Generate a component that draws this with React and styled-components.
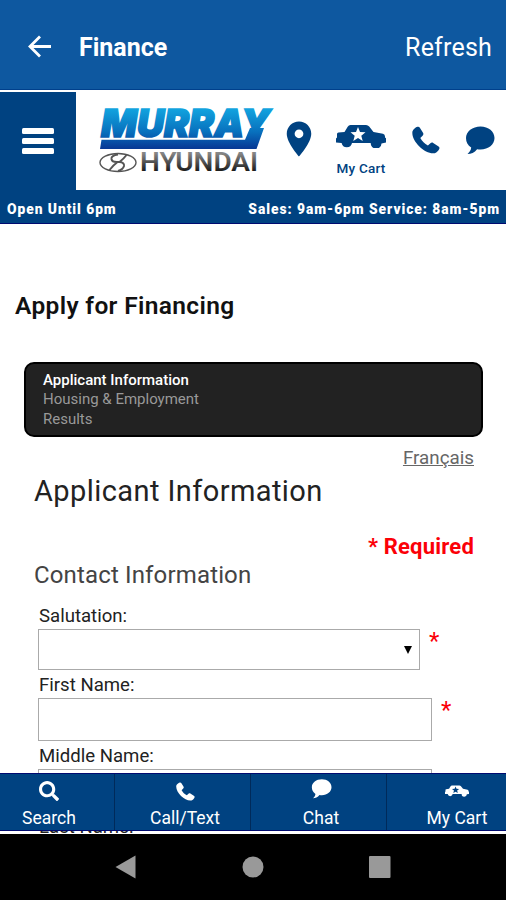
import React from 'react';
import styled, { createGlobalStyle } from 'styled-components';
import { FaSearch } from 'react-icons/fa';
import { MdLocationOn } from 'react-icons/md';

const GlobalStyle = createGlobalStyle`
    * {
        box-sizing: border-box;
    }

    body {
        margin: 0;
        background: #fff;
        font-family: Roboto, "Liberation Sans", sans-serif;
    }
`;

const Screen = styled.div`
    position: relative;
    display: flex;
    flex-direction: column;
    width: 506px;
    height: 900px;
    overflow: hidden;
    background: #fff;
`;

const AppBar = styled.header`
    display: flex;
    align-items: center;
    height: 90px;
    flex: none;
    padding: 4px 14px 0 27px;
    background: #0e58a0;
    border-bottom: 1px solid #00408c;
    color: #fff;
`;

const AppTitle = styled.h1`
    flex: 1;
    margin: 2px 0 0 27px;
    font-size: 25px;
    font-weight: 700;
    line-height: 30px;
`;

const RefreshButton = styled.button`
    margin-top: 2px;
    padding: 0;
    border: none;
    background: none;
    color: #fff;
    font: 400 25px/30px Roboto, sans-serif;
    letter-spacing: 0.2px;
`;

const SiteHeader = styled.div`
    display: flex;
    flex: none;
    height: 98px;
    margin-top: 2px;
    color: #004281;
`;

const MenuButton = styled.button`
    display: flex;
    flex: none;
    flex-direction: column;
    align-items: center;
    justify-content: center;
    gap: 4px;
    width: 76px;
    padding: 0 0 1px;
    border: none;
    background: #004281;
`;

const MenuLine = styled.span`
    width: 32px;
    height: 6px;
    border-radius: 1.5px;
    background: #fff;
`;

const Logo = styled.svg`
    flex: none;
    width: 178px;
    height: 72px;
    margin: 12px 0 0 22px;
    overflow: visible;
`;

const HeaderLinks = styled.nav`
    display: flex;
    flex: 1;
    align-items: flex-start;
    min-width: 0;
    padding-top: 26px;
`;

const HeaderLink = styled.a`
    display: flex;
    flex: none;
    flex-direction: column;
    align-items: center;
    width: ${props => props.$width}px;
    padding-top: ${props => props.$top || 0}px;
    font-size: 13.5px;
    font-weight: 500;
    line-height: 18px;
    letter-spacing: 0.25px;
    white-space: nowrap;

    span {
        margin-top: 11px;
    }
`;

const HoursBar = styled.div`
    display: flex;
    flex: none;
    justify-content: space-between;
    height: 34px;
    padding: 0 6px 0 7px;
    background: #004281;
    border-bottom: 1px solid #000a70;
    color: #fff;
    font-size: 13.8px;
    font-weight: 900;
    line-height: 38px;
    letter-spacing: 0.95px;
`;

const Content = styled.main`
    height: 610px;
    flex: none;
    overflow: hidden;
    color: #222;
`;

const PageTitle = styled.h2`
    margin: 67px 0 0 15px;
    color: #111;
    font-size: 24.5px;
    font-weight: 600;
    line-height: 30px;
    letter-spacing: 0.35px;
`;

const Steps = styled.ol`
    height: 75px;
    margin: 41px 23px 0 24px;
    padding: 7px 17px;
    border: 2px solid #000;
    border-radius: 10px;
    background: #222;
    list-style: none;
`;

const Step = styled.li`
    color: ${props => (props.$active ? '#fff' : '#999')};
    font-size: 15px;
    font-weight: ${props => (props.$active ? 500 : 400)};
    line-height: 19.3px;
`;

const Form = styled.form`
    display: flex;
    flex-direction: column;
    padding: 9px 32px 0 34px;
`;

const LanguageLink = styled.a`
    align-self: flex-end;
    color: #666;
    font-size: 18.8px;
    line-height: 24px;
    text-decoration: underline;
`;

const FormTitle = styled.h3`
    margin: 4px 0 0;
    color: #222;
    font-size: 29px;
    font-weight: 400;
    line-height: 34px;
    letter-spacing: 0.42px;
`;

const RequiredNote = styled.p`
    align-self: flex-end;
    margin: 26px 0 0;
    color: #fb0007;
    font-size: 22px;
    font-weight: 700;
    line-height: 26px;
    letter-spacing: 0.2px;
`;

const SectionTitle = styled.h4`
    margin: 1px 0 16px;
    color: #444;
    font-size: 24px;
    font-weight: 400;
    line-height: 28px;
    letter-spacing: 0.15px;
`;

const Field = styled.div`
    display: flex;
    flex-direction: column;
    height: ${props => props.$height}px;
    padding-left: 4px;
`;

const Label = styled.label`
    padding-left: 1px;
    font-size: 18.6px;
    line-height: 22px;
`;

const FieldRow = styled.div`
    display: flex;
    margin-top: 2px;
`;

const Input = styled.div`
    display: flex;
    align-items: center;
    justify-content: flex-end;
    width: ${props => props.$width}px;
    height: ${props => props.$height}px;
    padding-right: 7px;
    border: 1.5px solid #aaa;
`;

const Asterisk = styled.span`
    margin-left: 9px;
    color: #fb0007;
    font-size: 24px;
    line-height: 25px;
`;

const TabBar = styled.nav`
    position: absolute;
    top: 773px;
    left: 0;
    right: 0;
    display: flex;
    height: 58px;
    overflow: hidden;
    background: #004281;
    border-top: 1px solid #000a70;
    border-bottom: 1px solid #000a70;
`;

const Tab = styled.a`
    display: flex;
    flex: none;
    flex-direction: column;
    align-items: center;
    width: 136px;
    padding: 6px 0 0 5px;
    border-right: 1px solid #002a5a;
    color: #fff;
    font-size: 17.5px;
    line-height: 22px;

    &:first-child {
        margin-left: -21px;
    }
`;

const TabIcon = styled.span`
    display: flex;
    align-items: center;
    height: 22px;
    margin-bottom: 5px;
    padding-bottom: ${props => props.$lift || 0}px;
`;

const SystemBar = styled.div`
    display: flex;
    flex: none;
    align-items: center;
    justify-content: space-between;
    height: 66px;
    padding: 0 115px;
    background: #000;
`;

const BackArrow = () => (
    <svg width="25" height="24" viewBox="0 0 25 24" fill="none" stroke="#fff" strokeWidth="2.8">
        <path d="M24 11.5H3M13 1.5L3 11.5L13 21.5" />
    </svg>
);

const Phone = ({ size }) => (
    <svg width={size} height={size} viewBox="0 0 28 28" fill="currentColor">
        <path d="M.5 5.3C1.3 3.500 3.600 1.200 5.500.8c1.200-.2 1.900.2 2.500 1.200l3 4.800c.7 1.200.5 2-.4 2.900L8.300 12c1.800 3.200 4.300 5.700 7.600 7.500l2.500-2.300c.9-.8 1.800-.9 2.800-.3l5 3.300c1 .7 1.500 1.400 1.200 2.400-.6 2-2.600 4-4.600 4.600C13.500 29-1.400 15 .5 5.300Z" />
    </svg>
);

const Bubble = ({ width, height }) => (
    <svg width={width} height={height} viewBox="0 0 30 29" fill="currentColor">
        <path d="M15.500.5C23.500.5 29.500 5.600 29.500 12S23.500 23.500 15.500 23.500c-1.200 0-2.300-.1-3.400-.3C9.500 26.500 6 28 2.500 28c2-1.700 3.500-3.700 3.700-6.400C2.800 19.400 1 16 1 12 1 5.600 7.500.5 15.500.5Z" />
    </svg>
);

const Car = ({ width, height, star }) => (
    <svg width={width} height={height} viewBox="0 0 50 23" fill="currentColor">
        <path d="M14.500 0H30q2 0 3.200 1.500L37.500 7l9.500 1.700q2 .5 2 2.800v1l1 .7v4.300l-4.500 1A5.300 5.300 0 0 1 34.700 18H16A5.300 5.300 0 0 1 5.600 18L0 17.500V13.500l1-1V9q0-1.300 1.500-1.400L8.500 7l3.200-5.200Q12.700 0 14.500 0Z" />
        <path
            d="M22 2l2 5 5.500.3-4.200 3.400 1.400 5.200L22 13l-4.700 2.900 1.400-5.200-4.200-3.400L20 7Z"
            fill={star}
        />
    </svg>
);

const MurrayLogo = () => (
    <Logo viewBox="0 0 178 72">
        <defs>
            <linearGradient id="blue" x1="0" y1="4" x2="0" y2="44" gradientUnits="userSpaceOnUse">
                <stop offset="0" stopColor="#12a5e0" />
                <stop offset="0.6" stopColor="#0870bd" />
                <stop offset="1" stopColor="#073a96" />
            </linearGradient>
            <linearGradient id="steel" x1="0" y1="49" x2="0" y2="68" gradientUnits="userSpaceOnUse">
                <stop offset="0" stopColor="#888" />
                <stop offset="1" stopColor="#161616" />
            </linearGradient>
        </defs>
        <g fill="url(#blue)">
            <text
                x="3"
                y="33"
                textLength="169"
                lengthAdjust="spacingAndGlyphs"
                fontFamily="Inter, sans-serif"
                fontSize="38.5"
                fontWeight="900"
                fontStyle="italic"
                stroke="url(#blue)"
                strokeWidth="1.6"
            >
                MURRAY
            </text>
            <path d="M3.500 35.800H147L152 24H166L158.500 45H2Z" />
        </g>
        <g fill="none" stroke="#555">
            <ellipse cx="20" cy="58.500" rx="18" ry="9" strokeWidth="1.400" />
            <path d="M20 50.500q-7 1-6.500 4.500q.5 3 5 3h3q5 .5 4.500 4q-1 3.500-6 5M28.500 51q-3 4-7 7M11.500 66q4-5 8-8" strokeWidth="2" />
        </g>
        <text
            x="42"
            y="67"
            textLength="118"
            lengthAdjust="spacingAndGlyphs"
            fill="url(#steel)"
            fontFamily="Roboto, sans-serif"
            fontSize="25"
            fontWeight="600"
        >
            HYUNDAI
        </text>
    </Logo>
);

const fields = [
    { label: 'Salutation:', width: 382, inputHeight: 41, height: 69, select: true, required: true },
    { label: 'First Name:', width: 394, inputHeight: 43, height: 71, required: true },
    { label: 'Middle Name:', width: 394, inputHeight: 43, height: 71 },
    { label: 'Last Name:', width: 394, inputHeight: 43, height: 70 },
];

const tabs = [
    { label: 'Search', icon: <FaSearch size={20} /> },
    { label: 'Call/Text', icon: <Phone size={19} /> },
    { label: 'Chat', icon: <Bubble width={21} height={20} />, lift: 5 },
    { label: 'My Cart', icon: <Car width={24} height={12} star="#004281" />, lift: 1 },
];

const FinanceForm = () => (
    <Form>
        <LanguageLink>Français</LanguageLink>
        <FormTitle>Applicant Information</FormTitle>
        <RequiredNote>* Required</RequiredNote>
        <SectionTitle>Contact Information</SectionTitle>
        {fields.map(field => (
            <Field key={field.label} $height={field.height}>
                <Label>{field.label}</Label>
                <FieldRow>
                    <Input $width={field.width} $height={field.inputHeight}>
                        {field.select && (
                            <svg width="8" height="8" viewBox="0 0 8 8">
                                <path d="M0 0H8L4 8Z" />
                            </svg>
                        )}
                    </Input>
                    {field.required && <Asterisk>*</Asterisk>}
                </FieldRow>
            </Field>
        ))}
    </Form>
);

export default function App() {
    return (
        <>
            <GlobalStyle />
            <Screen>
                <AppBar>
                    <BackArrow />
                    <AppTitle>Finance</AppTitle>
                    <RefreshButton>Refresh</RefreshButton>
                </AppBar>
                <SiteHeader>
                    <MenuButton aria-label="Menu">
                        <MenuLine />
                        <MenuLine />
                        <MenuLine />
                    </MenuButton>
                    <MurrayLogo />
                    <HeaderLinks>
                        <HeaderLink $width={46}>
                            <MdLocationOn size={42} />
                        </HeaderLink>
                        <HeaderLink $width={78} $top={7}>
                            <Car width={50} height={23} star="#fff" />
                            <span>My Cart</span>
                        </HeaderLink>
                        <HeaderLink $width={52} $top={8}>
                            <Phone size={28} />
                        </HeaderLink>
                        <HeaderLink $width={56} $top={8}>
                            <Bubble width={30} height={29} />
                        </HeaderLink>
                    </HeaderLinks>
                </SiteHeader>
                <HoursBar>
                    <span>Open Until 6pm</span>
                    <span>Sales: 9am-6pm Service: 8am-5pm</span>
                </HoursBar>
                <Content>
                    <PageTitle>Apply for Financing</PageTitle>
                    <Steps>
                        <Step $active>Applicant Information</Step>
                        <Step>Housing &amp; Employment</Step>
                        <Step>Results</Step>
                    </Steps>
                    <FinanceForm />
                </Content>
                <TabBar>
                    {tabs.map(tab => (
                        <Tab key={tab.label}>
                            <TabIcon $lift={tab.lift}>{tab.icon}</TabIcon>
                            {tab.label}
                        </Tab>
                    ))}
                </TabBar>
                <SystemBar>
                    <svg width="22" height="24" viewBox="0 0 22 24" fill="#999">
                        <path d="M20.500 0.500V23.500L0.500 12Z" />
                    </svg>
                    <svg width="22" height="22" viewBox="0 0 22 22" fill="#999">
                        <circle cx="11" cy="11" r="10.500" />
                    </svg>
                    <svg width="22" height="22" viewBox="0 0 22 22" fill="#999">
                        <rect width="21.500" height="22" rx="1" />
                    </svg>
                </SystemBar>
            </Screen>
        </>
    );
}
